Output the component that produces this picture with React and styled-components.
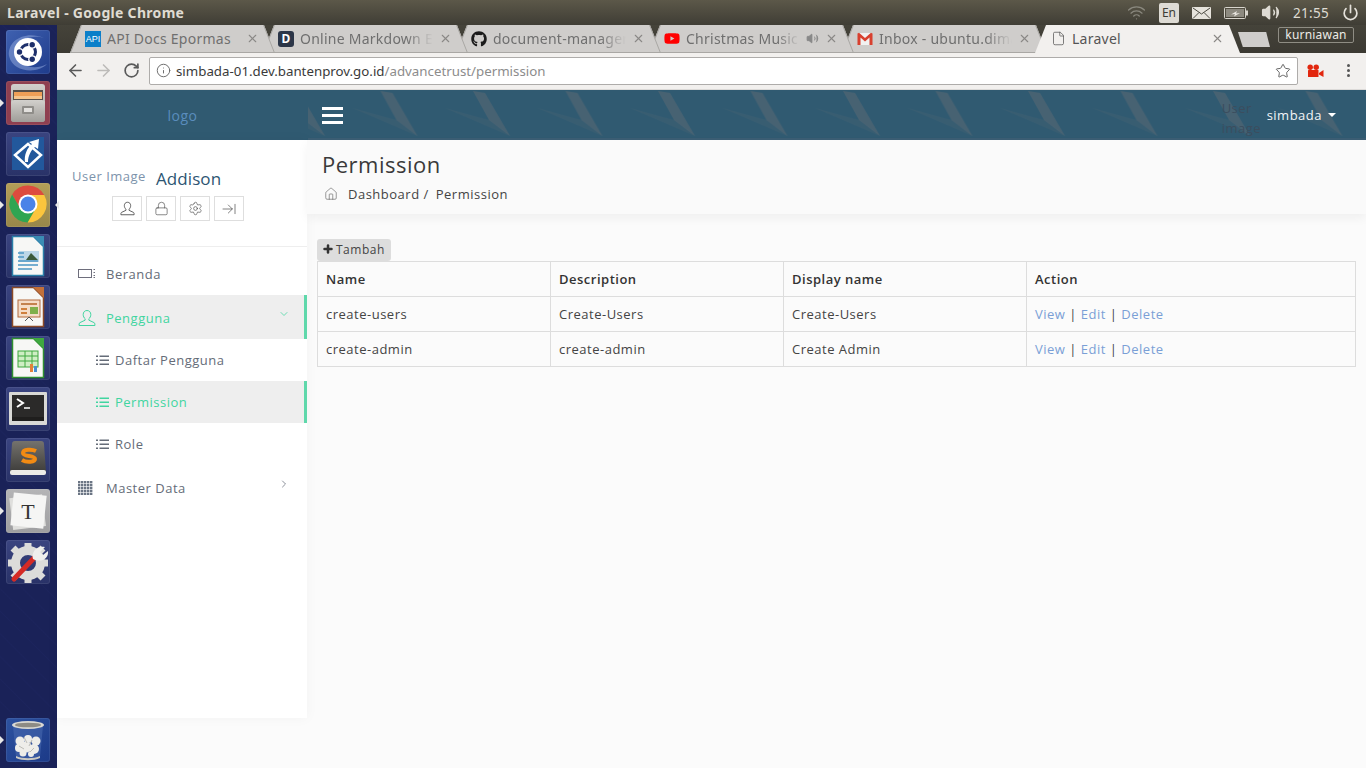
import React from "react";
import styled, { createGlobalStyle } from "styled-components";
import {
  ArrowLeft,
  ArrowRight,
  RotateCw,
  Info,
  Star,
  X,
  File,
  Lock,
  Settings,
  ArrowRightToLine,
  House,
  ChevronDown,
  ChevronRight,
  Plus,
  Volume2,
  Power,
  Wifi,
} from "lucide-react";
import { FaGithub, FaYoutube } from "react-icons/fa";

const GlobalStyle = createGlobalStyle`
  html, body {
    margin: 0;
    height: 100%;
    overflow: hidden;
    background: #fbfbfb;
  }
  * {
    box-sizing: border-box;
  }
`;

// ---- data
const tabs = [
  { title: "API Docs Epormas", icon: "api" },
  { title: "Online Markdown Editor", icon: "d", fade: true },
  { title: "document-manager", icon: "github", fade: true },
  { title: "Christmas Music", icon: "youtube", fade: true, sound: true },
  { title: "Inbox - ubuntu.dimas", icon: "gmail", fade: true },
  { title: "Laravel", icon: "file", active: true },
];

const permissions = [
  { name: "create-users", description: "Create-Users", display: "Create-Users" },
  { name: "create-admin", description: "create-admin", display: "Create Admin" },
];

const darkTile = "linear-gradient(#3a4480,#293268)";

// ---- little drawings
const UserIcon = ({ size = 18 }) => (
  <svg width={size} height={size} viewBox="0 0 18 18" fill="none" stroke="currentColor" strokeWidth="1">
    <path d="M9 1.5c-2.4 0-3.8 1.8-3.8 4 0 1.8.8 3.4 1.9 4.2v1.5L2 13.6c-.6.3-.9.8-.9 1.4v1.5h15.8V15c0-.6-.3-1.1-.9-1.4l-5.1-2.4V9.7c1.1-.8 1.9-2.4 1.9-4.2 0-2.2-1.4-4-3.8-4z" />
  </svg>
);

const ScreenIcon = () => (
  <svg width="18" height="12" viewBox="0 0 18 12" fill="none" stroke="#6e6e7c" strokeWidth="1">
    <rect x="0.5" y="1.5" width="13" height="8" />
    <path d="M15.5 1.5h2M15.5 4.5h2M15.5 7.5h2M15.5 9.5h2" strokeDasharray="1.5 0.5" />
  </svg>
);

const ListIcon = () => (
  <svg width="13" height="11" viewBox="0 0 13 11" fill="currentColor">
    <rect x="0" y="0.5" width="2" height="1.5" />
    <rect x="3.5" y="0.5" width="9.5" height="1.5" />
    <rect x="0" y="4.5" width="2" height="1.5" />
    <rect x="3.5" y="4.5" width="9.5" height="1.5" />
    <rect x="0" y="8.5" width="2" height="1.5" />
    <rect x="3.5" y="8.5" width="9.5" height="1.5" />
  </svg>
);

const GridIcon = () => (
  <svg width="15" height="14" viewBox="0 0 15 14" fill="#6b7584">
    {[0, 3, 6, 9, 12].map((y) =>
      [0, 3, 6, 9, 12].map((x) => <rect key={`${x}-${y}`} x={x} y={y} width="2.4" height="2.4" />)
    )}
  </svg>
);

const GmailIcon = () => (
  <svg width="16" height="14" viewBox="0 0 16 14">
    <path d="M1 1h14v12H1z" fill="#f1f1f1" />
    <path d="M0.5 13V1.5L2 .8 8 6l6-5.2 1.5.7V13h-3V5.5L8 9.5 3.5 5.5V13z" fill="#d8402f" />
  </svg>
);

const MovieCamera = () => (
  <svg width="17" height="14" viewBox="0 0 17 14" fill="#e2270e">
    <circle cx="3.2" cy="3.2" r="2.7" />
    <circle cx="9.2" cy="3.2" r="2.7" />
    <rect x="1" y="6" width="10.5" height="7" rx="0.5" />
    <path d="M12 9l4.5-3v7L12 10.5z" />
  </svg>
);

const MailGlyph = () => (
  <svg width="19" height="14" viewBox="0 0 19 14">
    <rect x="0" y="1" width="19" height="12" rx="1" fill="#e6e3dc" />
    <path d="M1 2l8.5 6L18 2M1 12.5l6-6M18 12.5l-6-6" fill="none" stroke="#4a483f" strokeWidth="1" />
  </svg>
);

const BatteryGlyph = () => (
  <svg width="24" height="14" viewBox="0 0 24 14">
    <rect x="0.5" y="1.5" width="21" height="11" rx="1" fill="none" stroke="#d8d5cd" />
    <rect x="2" y="3" width="18" height="8" fill="#8d8a80" />
    <rect x="22" y="4.5" width="2" height="5" fill="#d8d5cd" />
    <path d="M7 8.5l6-3.5-1 2.5 4-.5-6 3.5 1-2.5z" fill="#e8e5de" />
  </svg>
);

const UbuntuLogo = () => (
  <svg width="44" height="44" viewBox="0 0 44 44">
    <path d="M3 26C1 10 20 0 38 8 27 4 10 9 10 22c0 12 16 20 31 12-9 10-34 9-38-8z" fill="#8ea6da" opacity="0.55" />
    <circle cx="22" cy="22" r="14" fill="#fff" />
    <circle cx="22" cy="22" r="7.5" fill="none" stroke="#1d2f6b" strokeWidth="3" />
    <circle cx="13.5" cy="22" r="4" fill="#fff" />
    <circle cx="26.2" cy="14.7" r="4" fill="#fff" />
    <circle cx="26.2" cy="29.3" r="4" fill="#fff" />
    <circle cx="13.5" cy="22" r="2.7" fill="#1d2f6b" />
    <circle cx="26.2" cy="14.7" r="2.7" fill="#1d2f6b" />
    <circle cx="26.2" cy="29.3" r="2.7" fill="#1d2f6b" />
  </svg>
);

const FilesIcon = () => (
  <svg width="44" height="44" viewBox="0 0 44 44">
    <defs>
      <linearGradient id="cabinet" x1="0" y1="0" x2="0" y2="1">
        <stop offset="0" stopColor="#d2d0cc" />
        <stop offset="1" stopColor="#9f9d99" />
      </linearGradient>
    </defs>
    <rect x="5" y="3" width="34" height="38" rx="3" fill="url(#cabinet)" />
    <rect x="7" y="9" width="30" height="12" fill="#57504a" />
    <rect x="8" y="11" width="28" height="6" fill="#ef9f57" />
    <rect x="8" y="15" width="28" height="3" fill="#f6c48c" />
    <rect x="5" y="19" width="34" height="22" rx="3" fill="url(#cabinet)" />
    <rect x="16" y="25" width="12" height="8" rx="1" fill="#8f8d89" />
    <rect x="18" y="27" width="8" height="4" fill="#e2e0dd" />
  </svg>
);

const InstallerIcon = () => (
  <svg width="44" height="44" viewBox="0 0 44 44">
    <rect x="6" y="5" width="32" height="33" fill="#22589c" />
    <path d="M22 12L35 23 22 35 9 23z" fill="none" stroke="#fff" strokeWidth="2.5" />
    <path d="M19 30c-1-7 2-14 7-18l-3-2 10-3-1 10-3-2c-4 3-7 9-7 15z" fill="#fff" />
  </svg>
);

const ChromeIcon = () => (
  <svg width="44" height="44" viewBox="0 0 44 44">
    <path d="M22 12H38.2A18.5 18.5 0 0 0 6.1 11.5L14.2 25.5z" fill="#dd4b3e" />
    <path d="M14.2 25.5L6.1 11.5A18.5 18.5 0 0 0 21.7 39.5L29.8 25.5z" fill="#2fa552" />
    <path d="M29.8 25.5L21.7 39.5A18.5 18.5 0 0 0 38.2 12H22z" fill="#fbc53d" />
    <circle cx="22" cy="21" r="9.5" fill="#fff" />
    <circle cx="22" cy="21" r="7.5" fill="#4a83e8" />
  </svg>
);

const DocIcon = ({ edge, corner, children }) => (
  <svg width="44" height="44" viewBox="0 0 44 44">
    <path d="M6.5 2.5h21l10 10v29h-31z" fill="#f7f7f5" stroke={edge} strokeWidth="1.5" />
    <path d="M27 2h11v11z" fill={corner} />
    {children}
  </svg>
);

const TerminalIcon = () => (
  <svg width="44" height="44" viewBox="0 0 44 44">
    <rect x="3" y="5" width="38" height="33" rx="1" fill="#d9d9d6" />
    <rect x="6" y="8" width="32" height="26" fill="#2b2a29" />
    <rect x="6" y="30" width="32" height="4" fill="#1f1e1d" />
    <path d="M11 12l6 4-6 4" fill="none" stroke="#fff" strokeWidth="2" />
    <path d="M18 21h6" stroke="#fff" strokeWidth="1.5" />
  </svg>
);

const SublimeIcon = () => (
  <svg width="44" height="44" viewBox="0 0 44 44">
    <defs>
      <linearGradient id="sublime" x1="0" y1="0" x2="0" y2="1">
        <stop offset="0" stopColor="#74726d" />
        <stop offset="1" stopColor="#3e3d3b" />
      </linearGradient>
    </defs>
    <path d="M9 3h26c2 0 3 1 3 3l2 28H4L6 6c0-2 1-3 3-3z" fill="url(#sublime)" />
    <rect x="4" y="32" width="36" height="5" rx="2" fill="#ecebe7" />
    <path d="M30 13c-4-2-13-2-13 2 0 4 12 2 12 6 0 3-8 4-13 1" fill="none" stroke="#f28b13" strokeWidth="4" />
  </svg>
);

const TyporaIcon = () => (
  <svg width="44" height="44" viewBox="0 0 44 44">
    <rect x="5" y="7" width="33" height="32" fill="#dfdfdd" transform="rotate(-7 22 22)" />
    <rect x="6" y="5" width="33" height="33" fill="#f5f5f4" transform="rotate(6 22 22)" />
    <TyporaLetter x="22" y="30" textAnchor="middle">T</TyporaLetter>
  </svg>
);

const ToolsIcon = () => (
  <svg width="44" height="44" viewBox="0 0 44 44">
    <circle cx="22" cy="23" r="12.5" fill="none" stroke="#dcdcda" strokeWidth="9" />
    <path d="M22 3v7M22 36v7M2 23h7M35 23h7M7 8l5 5M32 33l5 5M37 8l-5 5M12 33l-5 5" stroke="#dcdcda" strokeWidth="7" />
    <path d="M8 39L29 17" stroke="#d42a25" strokeWidth="5" strokeLinecap="round" />
    <path d="M27 19c-2-7 4-14 12-12l-5 5 3 3 5-4c1 8-7 12-15 8z" fill="#efefed" />
  </svg>
);

const TrashIcon = () => (
  <svg width="44" height="44" viewBox="0 0 44 44">
    <path d="M7 8h30l-3 31c-6 3-18 3-24 0z" fill="#4b6cb0" opacity="0.55" />
    <path d="M10 38c6 3 18 3 24 0v2c-6 3-18 3-24 0z" fill="#c9c8c3" />
    <ellipse cx="22" cy="7" rx="16" ry="4" fill="#d9d8d3" />
    <ellipse cx="22" cy="7" rx="13" ry="2.3" fill="#8d8b85" />
    <g fill="#eeede9">
      <circle cx="14" cy="23" r="4.5" />
      <circle cx="22" cy="21" r="4" />
      <circle cx="30" cy="23" r="4.5" />
      <circle cx="13" cy="30" r="4" />
      <circle cx="20" cy="29" r="5.5" />
      <circle cx="28" cy="31" r="5" />
      <circle cx="17" cy="35" r="3.5" />
      <circle cx="25" cy="36" r="3" />
    </g>
    <path d="M18 19l3 6M26 22l-3 6M13 28l5 3M28 30l-4 4" stroke="#bdbcb7" strokeWidth="1" />
  </svg>
);

const Favicon = ({ type }) => {
  if (type === "api") return <ApiFavicon>API</ApiFavicon>;
  if (type === "d") return <DFavicon>D</DFavicon>;
  if (type === "github") return <FaGithub size={16} color="#1b1b1b" />;
  if (type === "youtube") return <FaYoutube size={17} color="#f00" />;
  if (type === "gmail") return <GmailIcon />;
  return <File size={15} strokeWidth={1.2} color="#555" />;
};

// ---- page
const App = () => {
  return (
    <Screen>
      <GlobalStyle />
      <TopPanel>
        <WindowTitle>Laravel - Google Chrome</WindowTitle>
        <Indicators>
          <Wifi size={19} color="#8a887e" strokeWidth={1.6} />
          <LangBox>En</LangBox>
          <MailGlyph />
          <BatteryGlyph />
          <Volume2 size={19} color="#dedbd4" fill="#dedbd4" strokeWidth={1.6} />
          <Clock>21:55</Clock>
          <Power size={17} color="#e4e1da" strokeWidth={2.4} />
        </Indicators>
      </TopPanel>
      <Desktop>
        <Launcher>
          <Tile $bg="linear-gradient(135deg,#3f61b0,#1f3c8c)"><UbuntuLogo /></Tile>
          <Tile $bg="#8f3f50" $pip><FilesIcon /></Tile>
          <Tile $bg={darkTile}><InstallerIcon /></Tile>
          <Tile $bg="linear-gradient(#b39e58,#98874a)" $pip $focus><ChromeIcon /></Tile>
          <Tile $bg={darkTile}>
            <DocIcon edge="#2a7fa8" corner="#3a8cb4">
              <rect x="13" y="17" width="20" height="11" fill="#bcd7e8" />
              <path d="M20 26l5-7 7 7z" fill="#3b5a3a" />
              <path d="M12 19h6M12 23h6M12 27h20M12 31h20M12 35h14" stroke="#4b97c4" strokeWidth="1.5" />
            </DocIcon>
          </Tile>
          <Tile $bg={darkTile}>
            <DocIcon edge="#8b4a26" corner="#c2703a">
              <rect x="12" y="15" width="22" height="17" fill="#f5ddc8" stroke="#b36a3c" />
              <path d="M15 18h16v2H15z" fill="#c4824e" />
              <path d="M15 23h6v2h-6zM15 27h6v2h-6z" fill="#d0803e" />
              <rect x="24" y="22" width="8" height="7" fill="#7fb04b" />
              <path d="M23 32l-4 4M23 32l4 4" stroke="#555" />
            </DocIcon>
          </Tile>
          <Tile $bg={darkTile}>
            <DocIcon edge="#2f8f2f" corner="#3fa83f">
              <rect x="12" y="15" width="20" height="16" fill="#cfeec4" stroke="#3fa83f" />
              <path d="M12 20h20M12 25h20M19 15v16M26 15v16" stroke="#3fa83f" strokeWidth="1" />
              <rect x="24" y="28" width="3" height="8" fill="#e2803a" />
              <rect x="28" y="30" width="3" height="6" fill="#4a8ed0" />
            </DocIcon>
          </Tile>
          <Tile $bg={darkTile}><TerminalIcon /></Tile>
          <Tile $bg={darkTile}><SublimeIcon /></Tile>
          <Tile $bg="linear-gradient(#b4b4b6,#9e9ea0)" $pip><TyporaIcon /></Tile>
          <Tile $bg={darkTile}><ToolsIcon /></Tile>
          <TrashTile $bg="linear-gradient(135deg,#2d52a0,#1c3a88)" $pip><TrashIcon /></TrashTile>
        </Launcher>
        <Browser>
          <TabBar>
            <TabStrip>
              {tabs.map((tab, i) => (
                <Tab key={tab.title} $active={tab.active} $order={tabs.length - i}>
                  <TabShape viewBox="0 0 205 28" preserveAspectRatio="none">
                    <polygon
                      points="0,28 11,0 194,0 205,28"
                      fill={tab.active ? "#f2f0ee" : "#cfcdcb"}
                    />
                    {!tab.active && <path d="M0 27.5H205" stroke="#a9a7a4" />}
                    {!tab.active && <path d="M193.5 0L204.5 28M11.5 0L.5 28" stroke="#a9a7a4" fill="none" />}
                  </TabShape>
                  <TabIcon><Favicon type={tab.icon} /></TabIcon>
                  <TabTitle $fade={tab.fade} $active={tab.active}>{tab.title}</TabTitle>
                  {tab.sound && <TabClose><Volume2 size={13} color="#888" fill="#888" strokeWidth={1.5} /></TabClose>}
                  <TabClose><X size={13} strokeWidth={2} /></TabClose>
                </Tab>
              ))}
              <NewTab />
            </TabStrip>
            <UserBadge>kurniawan</UserBadge>
          </TabBar>
          <Toolbar>
            <NavButton $color="#5a5a5a"><ArrowLeft size={19} strokeWidth={2} /></NavButton>
            <NavButton $color="#bdbbb9"><ArrowRight size={19} strokeWidth={2} /></NavButton>
            <NavButton $color="#5a5a5a"><RotateCw size={17} strokeWidth={2.4} /></NavButton>
            <Omnibox>
              <Info size={15} color="#666" strokeWidth={1.5} />
              <UrlText>simbada-01.dev.bantenprov.go.id<UrlPath>/advancetrust/permission</UrlPath></UrlText>
              <Star size={16} color="#666" strokeWidth={1.5} />
            </Omnibox>
            <Extensions>
              <MovieCamera />
              <MenuDots><i /><i /><i /></MenuDots>
            </Extensions>
          </Toolbar>
          <Page>
            <Navbar>
              <Brand>logo</Brand>
              <NavMain>
                <NavPattern>
                  <defs>
                    <pattern id="streaks" width="92.5" height="50" patternUnits="userSpaceOnUse" x="-20" y="0">
                      <polygon points="0,1 12,3 37,46 16,30" fill="#b98a78" opacity="0.17" />
                      <polygon points="-28,18 16,30 37,46" fill="#b98a78" opacity="0.06" />
                      <polygon points="92.5,1 104.5,3 129.5,46 108.5,30" fill="#b98a78" opacity="0.17" />
                      <polygon points="64.5,18 108.5,30 129.5,46" fill="#b98a78" opacity="0.06" />
                    </pattern>
                  </defs>
                  <rect width="100%" height="100%" fill="url(#streaks)" />
                </NavPattern>
                <Burger><span /><span /><span /></Burger>
                <NavUser>
                  <AltAvatar>User image</AltAvatar>
                  simbada
                  <Caret />
                </NavUser>
              </NavMain>
            </Navbar>
            <Body>
              <Sidebar>
                <Profile>
                  <ProfileRow>
                    <ProfileAlt>User Image</ProfileAlt>
                    <ProfileName>Addison</ProfileName>
                  </ProfileRow>
                  <ProfileActions>
                    <ActionBox><UserIcon size={15} /></ActionBox>
                    <ActionBox><Lock size={15} strokeWidth={1} /></ActionBox>
                    <ActionBox><Settings size={15} strokeWidth={1} /></ActionBox>
                    <ActionBox><ArrowRightToLine size={16} strokeWidth={1} /></ActionBox>
                  </ProfileActions>
                </Profile>
                <Menu>
                  <MenuItem $short>
                    <MenuIcon><ScreenIcon /></MenuIcon>
                    Beranda
                  </MenuItem>
                  <MenuItem $active>
                    <MenuIcon><UserIcon /></MenuIcon>
                    Pengguna
                    <MenuChevron><ChevronDown size={12} strokeWidth={1.5} /></MenuChevron>
                  </MenuItem>
                  <SubItem><ListIcon />Daftar Pengguna</SubItem>
                  <SubItem $active><ListIcon />Permission</SubItem>
                  <SubItem><ListIcon />Role</SubItem>
                  <LastItem>
                    <MenuIcon><GridIcon /></MenuIcon>
                    Master Data
                    <MenuChevron><ChevronRight size={12} strokeWidth={1.5} /></MenuChevron>
                  </LastItem>
                </Menu>
              </Sidebar>
              <Content>
                <PageHeader>
                  <PageTitle>Permission</PageTitle>
                  <Breadcrumb>
                    <House size={14} strokeWidth={1} color="#555" />
                    <Crumb>Dashboard /</Crumb>
                    <span>Permission</span>
                  </Breadcrumb>
                </PageHeader>
                <Panel>
                  <AddButton><Plus size={12} strokeWidth={5} color="#333" />Tambah</AddButton>
                  <Table>
                    <colgroup>
                      <col width="233" />
                      <col width="233" />
                      <col width="243" />
                      <col />
                    </colgroup>
                    <thead>
                      <tr>
                        <Th>Name</Th>
                        <Th>Description</Th>
                        <Th>Display name</Th>
                        <Th>Action</Th>
                      </tr>
                    </thead>
                    <tbody>
                      {permissions.map((p) => (
                        <tr key={p.name}>
                          <Td>{p.name}</Td>
                          <Td>{p.description}</Td>
                          <Td>{p.display}</Td>
                          <Td>
                            <RowLink>View</RowLink> | <RowLink>Edit</RowLink> | <RowLink>Delete</RowLink>
                          </Td>
                        </tr>
                      ))}
                    </tbody>
                  </Table>
                </Panel>
              </Content>
            </Body>
          </Page>
        </Browser>
      </Desktop>
    </Screen>
  );
};

const Screen = styled.div`
  height: 768px;
  display: flex;
  flex-direction: column;
  overflow: hidden;
  font-family: "Open Sans", "Liberation Sans", sans-serif;
`;

// ubuntu panel
const TopPanel = styled.div`
  height: 25px;
  flex: none;
  display: flex;
  align-items: center;
  justify-content: space-between;
  padding: 0 7px 0 7px;
  background: linear-gradient(#5c5849, #3f3d35);
  font-family: "Noto Sans", sans-serif;
`;
const WindowTitle = styled.div`
  color: #dfdbd2;
  font-size: 14px;
  font-weight: 700;
  letter-spacing: 0.3px;
`;
const Indicators = styled.div`
  display: flex;
  align-items: center;
  gap: 13px;
`;
const LangBox = styled.div`
  width: 20px;
  height: 20px;
  border-radius: 2px;
  background: #dedbd4;
  color: #3f3d35;
  font-size: 12px;
  line-height: 20px;
  text-align: center;
`;
const Clock = styled.div`
  color: #dfdbd2;
  font-size: 13.5px;
  letter-spacing: 0.3px;
`;

const Desktop = styled.div`
  flex: 1;
  display: flex;
  min-height: 0;
`;

// dock
const Launcher = styled.div`
  width: 57px;
  flex: none;
  display: flex;
  flex-direction: column;
  gap: 7px;
  padding: 5px 0 6px 6px;
  background: repeating-linear-gradient(45deg, #1a2258, #1a2258 14px, #1c245c 15px, #1a2258 16px);
`;
const Tile = styled.div`
  position: relative;
  width: 44px;
  height: 44px;
  flex: none;
  border-radius: 3px;
  background: ${(p) => p.$bg};
  box-shadow: inset 0 0 0 1px rgba(255, 255, 255, 0.08);
  &::before {
    content: "";
    display: ${(p) => (p.$pip ? "block" : "none")};
    position: absolute;
    left: -6px;
    top: 18px;
    border: 4px solid transparent;
    border-left: 4px solid #e8e8e8;
  }
  &::after {
    content: "";
    display: ${(p) => (p.$focus ? "block" : "none")};
    position: absolute;
    right: -9px;
    top: 18px;
    border: 4px solid transparent;
    border-right: 4px solid #e8e8e8;
  }
`;
const TrashTile = styled(Tile)`
  margin-top: auto;
`;
const TyporaLetter = styled.text`
  font-family: "Liberation Serif", serif;
  font-size: 22px;
  fill: #333;
`;

const Browser = styled.div`
  flex: 1;
  min-width: 0;
  display: flex;
  flex-direction: column;
`;

// chrome tabs
const TabBar = styled.div`
  height: 28px;
  flex: none;
  display: flex;
  background: linear-gradient(#45433a, #3c3a33);
  font-family: "Noto Sans", sans-serif;
`;
const TabStrip = styled.div`
  display: flex;
  padding-left: 13px;
`;
const Tab = styled.div`
  position: relative;
  z-index: ${(p) => (p.$active ? 10 : p.$order)};
  width: 205px;
  height: 28px;
  margin-right: -12px;
  padding: 0 16px 1px 15px;
  display: flex;
  align-items: center;
  gap: 6px;
`;
const TabShape = styled.svg`
  position: absolute;
  inset: 0;
  width: 100%;
  height: 100%;
`;
const TabIcon = styled.span`
  position: relative;
  width: 16px;
  height: 16px;
  flex: none;
  display: flex;
  align-items: center;
  justify-content: center;
`;
const ApiFavicon = styled.span`
  width: 16px;
  height: 16px;
  background: #0b7fc9;
  color: #fff;
  font-size: 9px;
  line-height: 16px;
  text-align: center;
  font-family: "Liberation Sans", sans-serif;
`;
const DFavicon = styled.span`
  width: 16px;
  height: 16px;
  border-radius: 3px;
  background: #2c3648;
  color: #fff;
  font-size: 12px;
  font-weight: 700;
  line-height: 16px;
  text-align: center;
`;
const TabTitle = styled.span`
  position: relative;
  flex: 1;
  min-width: 0;
  overflow: hidden;
  white-space: nowrap;
  font-size: 14px;
  letter-spacing: 0.25px;
  color: ${(p) => (p.$active ? "#555" : "#6f6f6f")};
  ${(p) => p.$fade && "mask-image: linear-gradient(to right, #000 80%, transparent);"}
`;
const TabClose = styled.span`
  position: relative;
  flex: none;
  display: flex;
  color: #8a8886;
`;
const NewTab = styled.div`
  width: 32px;
  height: 15px;
  margin: 7px 0 0 10px;
  background: #cfcdcb;
  clip-path: polygon(0 0, 88% 0, 100% 100%, 15% 100%);
`;
const UserBadge = styled.div`
  width: 76px;
  height: 16px;
  margin: 2px 12px 0 auto;
  border: 1px solid #8f8d84;
  border-radius: 2px;
  color: #ecebe6;
  font-size: 12px;
  line-height: 14px;
  letter-spacing: 0.2px;
  text-align: center;
`;

// chrome toolbar
const Toolbar = styled.div`
  height: 37px;
  flex: none;
  display: flex;
  align-items: center;
  padding: 0 0 1px 4px;
  background: #f2f0ee;
  border-bottom: 1px solid #dcdad8;
  font-family: "Noto Sans", sans-serif;
`;
const NavButton = styled.div`
  width: 28px;
  display: flex;
  justify-content: center;
  color: ${(p) => p.$color};
`;
const Omnibox = styled.div`
  width: 1149px;
  height: 28px;
  margin-left: 4px;
  padding: 0 6px;
  display: flex;
  align-items: center;
  gap: 5px;
  background: #fff;
  border: 1px solid #aeacaa;
  border-radius: 2px;
`;
const UrlText = styled.div`
  flex: 1;
  font-size: 13.3px;
  color: #3a3a3a;
`;
const UrlPath = styled.span`
  color: #8c8c8c;
`;
const Extensions = styled.div`
  flex: 1;
  display: flex;
  align-items: center;
  padding-left: 9px;
  gap: 23px;
`;
const MenuDots = styled.div`
  display: flex;
  flex-direction: column;
  gap: 2px;
  i {
    width: 3px;
    height: 3px;
    background: #555;
    border-radius: 50%;
  }
`;

// app
const Page = styled.div`
  flex: 1;
  min-height: 0;
  display: flex;
  flex-direction: column;
  background: #fbfbfb;
  color: #4a4a4a;
  letter-spacing: 0.5px;
`;
const Navbar = styled.div`
  height: 50px;
  flex: none;
  display: flex;
  background: #305a71;
`;
const Brand = styled.div`
  width: 251px;
  flex: none;
  text-align: center;
  line-height: 52px;
  font-size: 14px;
  color: #5a8dbd;
`;
const NavMain = styled.div`
  position: relative;
  flex: 1;
  display: flex;
  align-items: center;
  justify-content: space-between;
  padding: 2px 30px 0 14px;
  border-bottom: 2px solid #3b5d73;
`;
const NavPattern = styled.svg`
  position: absolute;
  inset: 0;
  width: 100%;
  height: 100%;
`;
const Burger = styled.div`
  position: relative;
  display: flex;
  flex-direction: column;
  gap: 4px;
  span {
    width: 21px;
    height: 3px;
    background: #fff;
  }
`;
const NavUser = styled.div`
  position: relative;
  display: flex;
  align-items: center;
  margin-top: -1px;
  font-size: 13px;
  color: #f2f5f7;
`;
const AltAvatar = styled.div`
  position: absolute;
  left: -45px;
  top: -8px;
  width: 42px;
  font-size: 13px;
  line-height: 20px;
  color: #3b4d5e;
`;
const Caret = styled.span`
  margin-left: 6px;
  border: 4px solid transparent;
  border-top: 4px solid #fff;
  border-bottom: 0;
`;

const Body = styled.div`
  flex: 1;
  min-height: 0;
  display: flex;
  align-items: flex-start;
`;

const Sidebar = styled.div`
  width: 250px;
  height: 578px;
  flex: none;
  background: #fff;
  box-shadow: 0 0 12px rgba(0, 0, 0, 0.04);
`;
const Profile = styled.div`
  height: 107px;
  padding: 26px 0 0 15px;
  border-bottom: 1px solid #eee;
`;
const ProfileRow = styled.div`
  display: flex;
  gap: 10px;
`;
const ProfileAlt = styled.div`
  font-size: 13px;
  line-height: 20px;
  color: #7d93ab;
`;
const ProfileName = styled.div`
  margin-top: 2px;
  font-size: 17px;
  line-height: 22px;
  letter-spacing: 0.1px;
  color: #2d5572;
`;
const ProfileActions = styled.div`
  display: flex;
  gap: 4px;
  margin: 6px 0 0 40px;
`;
const ActionBox = styled.div`
  width: 30px;
  height: 25px;
  display: flex;
  align-items: center;
  justify-content: center;
  border: 1px solid #dedede;
  color: #444;
`;
const Menu = styled.div`
  padding-top: 6px;
`;
const MenuItem = styled.div`
  height: ${(p) => (p.$short ? "42px" : "44px")};
  display: flex;
  align-items: center;
  padding: ${(p) => (p.$active ? "2px" : "0")} 14px 0 21px;
  font-size: 13px;
  color: ${(p) => (p.$active ? "#41d5a0" : "#656c78")};
  background: ${(p) => (p.$active ? "#eeeeee" : "transparent")};
  border-right: 3px solid ${(p) => (p.$active ? "#5fd8ab" : "transparent")};
`;
const LastItem = styled(MenuItem)`
  margin-top: 1px;
`;
const MenuIcon = styled.span`
  width: 28px;
  flex: none;
  display: flex;
`;
const MenuChevron = styled.span`
  margin-left: auto;
  display: flex;
  margin-top: -8px;
`;
const SubItem = styled.div`
  height: 42px;
  display: flex;
  align-items: center;
  gap: 6px;
  padding-left: 39px;
  font-size: 13px;
  color: ${(p) => (p.$active ? "#41d5a0" : "#656c78")};
  background: ${(p) => (p.$active ? "#eeeeee" : "transparent")};
  border-right: 3px solid ${(p) => (p.$active ? "#5fd8ab" : "transparent")};
`;

const Content = styled.div`
  flex: 1;
  min-width: 0;
`;
const PageHeader = styled.div`
  height: 74px;
  padding: 9px 15px 0;
  background: #fafafa;
  box-shadow: 0 4px 10px rgba(0, 0, 0, 0.05);
`;
const PageTitle = styled.h1`
  margin: 0;
  font-size: 22px;
  font-weight: 400;
  line-height: 30px;
  color: #3a3a3a;
`;
const Breadcrumb = styled.div`
  display: flex;
  align-items: center;
  margin: 6px 0 0 2px;
  font-size: 13px;
  line-height: 18px;
  color: #444;
`;
const Crumb = styled.span`
  margin: 0 7px 0 10px;
`;
const Panel = styled.div`
  padding: 25px 10px 0;
`;
const AddButton = styled.div`
  width: 74px;
  height: 22px;
  display: flex;
  align-items: center;
  gap: 2px;
  padding: 0 0 2px 5px;
  border-radius: 3px;
  background: #dddddd;
  font-size: 12px;
  color: #444;
`;
const Table = styled.table`
  width: 1039px;
  border-collapse: collapse;
  table-layout: fixed;
  font-size: 13px;
`;
const Th = styled.th`
  height: 35px;
  padding: 0 8px;
  border: 1px solid #dddddd;
  font-weight: 600;
  text-align: left;
  color: #333;
`;
const Td = styled.td`
  height: 35px;
  padding: 0 8px;
  border: 1px solid #dddddd;
  color: #444;
`;
const RowLink = styled.span`
  color: #7a9fd6;
`;

export default App;
